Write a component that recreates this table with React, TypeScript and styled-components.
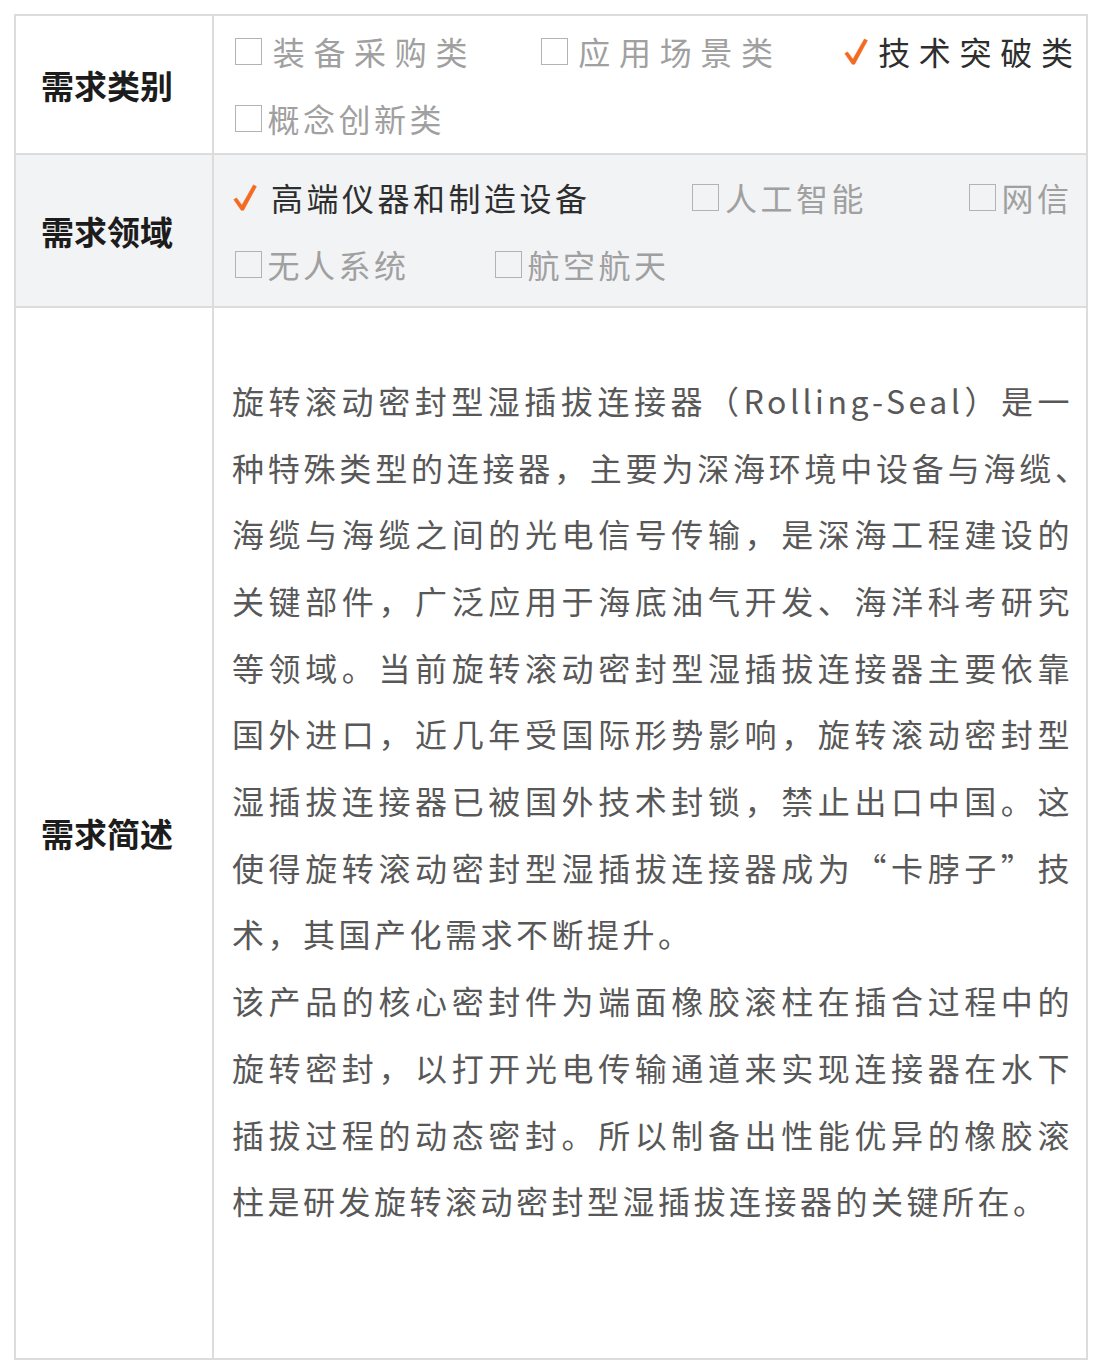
import React from 'react';
import styled, { createGlobalStyle } from 'styled-components';

const GlobalStyle = createGlobalStyle`
  *, *::before, *::after { box-sizing: border-box; }
  html, body { margin: 0; padding: 0; background: #ffffff; }
  body {
    font-family: "Noto Sans CJK SC", "Noto Sans", "Liberation Sans", sans-serif;
  }
`;

const LINE = 66.7;
const BORDER = '#dcdcdc';

const Page = styled.div`
  padding: 14px 5px 11px 14px;
`;

const Table = styled.div`
  width: 1074px;
  display: grid;
  grid-template-columns: 198px 1fr;
  border: 2px solid ${BORDER};
`;

const LabelCell = styled.div<{ $shaded?: boolean; $last?: boolean }>`
  display: flex;
  align-items: center;
  justify-content: center;
  padding-right: 14px;
  font-size: 33px;
  font-weight: 700;
  color: #1c1c1c;
  background: ${(p) => (p.$shaded ? '#f2f3f5' : '#ffffff')};
  border-right: 2px solid ${BORDER};
  border-bottom: ${(p) => (p.$last ? 'none' : `2px solid ${BORDER}`)};
`;

const ContentCell = styled.div<{ $shaded?: boolean; $last?: boolean; $padY: string }>`
  padding: ${(p) => p.$padY};
  padding-left: 18px;
  padding-right: 13px;
  font-size: 32px;
  line-height: ${LINE}px;
  background: ${(p) => (p.$shaded ? '#f2f3f5' : '#ffffff')};
  border-bottom: ${(p) => (p.$last ? 'none' : `2px solid ${BORDER}`)};
`;

const OptionLine = styled.div<{ $spread?: boolean; $gap?: number; $inset?: number }>`
  display: flex;
  align-items: center;
  height: ${LINE}px;
  margin-right: ${(p) => p.$inset ?? 0}px;
  justify-content: ${(p) => (p.$spread ? 'space-between' : 'flex-start')};
  column-gap: ${(p) => (p.$gap ? `${p.$gap}px` : '0')};
`;

const Option = styled.span<{ $checked?: boolean }>`
  display: inline-flex;
  align-items: center;
  white-space: nowrap;
  color: ${(p) => (p.$checked ? '#2e2e2e' : '#a0a0a0')};
`;

const Box = styled.span<{ $after: number }>`
  display: inline-block;
  width: 27px;
  height: 27px;
  margin-left: 3px;
  margin-right: ${(p) => p.$after}px;
  border: 1.7px solid #b3b3b3;
  flex-shrink: 0;
`;

const Check = styled.svg<{ $after: number }>`
  display: block;
  width: 24px;
  height: 27px;
  margin-left: 1px;
  margin-right: ${(p) => p.$after}px;
  flex-shrink: 0;
`;

const OptionText = styled.span<{ $ls: number }>`
  letter-spacing: ${(p) => p.$ls}px;
  margin-right: ${(p) => -p.$ls}px;
`;

const Paragraph = styled.p`
  margin: 0;
  text-align: justify;
  letter-spacing: 3.5px;
  color: #585858;
`;

/* closing punctuation set half width at a line end */
const EndPunct = styled.span`
  display: inline-block;
  width: 16px;
  margin-right: 2px;
  letter-spacing: 0;
  white-space: nowrap;
  font-feature-settings: "halt";
`;

const CheckIcon = ({ after }: { after: number }) => (
  <Check $after={after} viewBox="0 0 24 27" aria-hidden>
    <path
      d="M0.8 15.6 L3.6 13.9 L8.9 21.2 L20.4 0.9 L23.4 2.6 L10.6 26.2 L8.2 26.2 Z"
      fill="#f36a21"
      stroke="#f36a21"
      strokeWidth="0.6"
      strokeLinejoin="round"
    />
  </Check>
);

type Item = { text: string; checked?: boolean; markGap?: number };

const OptionItem = ({ item, ls }: { item: Item; ls: number }) => (
  <Option $checked={item.checked}>
    {item.checked ? (
      <CheckIcon after={item.markGap ?? ls + 2} />
    ) : (
      <Box $after={ls + 2} />
    )}
    <OptionText $ls={ls}>{item.text}</OptionText>
  </Option>
);

const para1a =
  '旋转滚动密封型湿插拔连接器（Rolling-Seal）是一种特殊类型的连接器，主要为深海环境中设备与海缆';
const para1b =
  '海缆与海缆之间的光电信号传输，是深海工程建设的关键部件，广泛应用于海底油气开发、海洋科考研究等领域。当前旋转滚动密封型湿插拔连接器主要依靠国外进口，近几年受国际形势影响，旋转滚动密封型湿插拔连接器已被国外技术封锁，禁止出口中国。这使得旋转滚动密封型湿插拔连接器成为“卡脖子”技术，其国产化需求不断提升。';
const para2 =
  '该产品的核心密封件为端面橡胶滚柱在插合过程中的旋转密封，以打开光电传输通道来实现连接器在水下插拔过程的动态密封。所以制备出性能优异的橡胶滚柱是研发旋转滚动密封型湿插拔连接器的关键所在。';

export default function App() {
  return (
    <>
      <GlobalStyle />
      <Page>
        <Table>
          <LabelCell>需求类别</LabelCell>
          <ContentCell $padY="2px 0">
            <OptionLine $spread>
              <OptionItem ls={8.7} item={{ text: '装备采购类' }} />
              <OptionItem ls={8.7} item={{ text: '应用场景类' }} />
              <OptionItem ls={8.7} item={{ text: '技术突破类', checked: true, markGap: 10 }} />
            </OptionLine>
            <OptionLine>
              <OptionItem ls={3.5} item={{ text: '概念创新类' }} />
            </OptionLine>
          </ContentCell>

          <LabelCell $shaded>需求领域</LabelCell>
          <ContentCell $shaded $padY="8.8px 0">
            <OptionLine $spread $inset={4}>
              <OptionItem ls={3.5} item={{ text: '高端仪器和制造设备', checked: true, markGap: 14 }} />
              <OptionItem ls={3.5} item={{ text: '人工智能' }} />
              <OptionItem ls={3.5} item={{ text: '网信' }} />
            </OptionLine>
            <OptionLine $gap={86}>
              <OptionItem ls={3.5} item={{ text: '无人系统' }} />
              <OptionItem ls={3.5} item={{ text: '航空航天' }} />
            </OptionLine>
          </ContentCell>

          <LabelCell $last>需求简述</LabelCell>
          <ContentCell $last $padY="58.5px 0 124.5px">
            <Paragraph>
              {para1a}
              <EndPunct>、</EndPunct>
              {para1b}
            </Paragraph>
            <Paragraph>{para2}</Paragraph>
          </ContentCell>
        </Table>
      </Page>
    </>
  );
}
